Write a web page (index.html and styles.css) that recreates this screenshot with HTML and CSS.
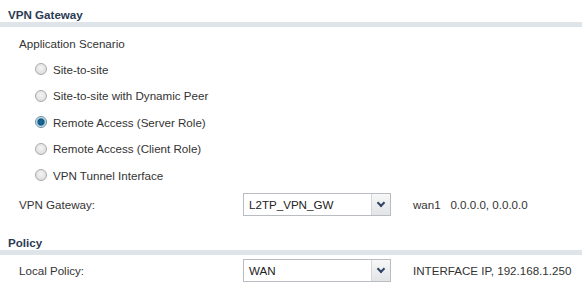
FILE: index.html
```html
<!doctype html>
<html lang="en">
<head>
    <meta charset="UTF-8">
    <title>VPN Gateway</title>
    <link rel="stylesheet" href="styles.css">
</head>
<body>
    <div class="section-title">VPN Gateway</div>
    <div class="section">
        <div class="group-label">Application Scenario</div>
        <label class="radio-row"><input type="radio" name="scenario"><span>Site-to-site</span></label>
        <label class="radio-row"><input type="radio" name="scenario"><span>Site-to-site with Dynamic Peer</span></label>
        <label class="radio-row"><input type="radio" name="scenario" checked><span>Remote Access (Server Role)</span></label>
        <label class="radio-row"><input type="radio" name="scenario"><span>Remote Access (Client Role)</span></label>
        <label class="radio-row"><input type="radio" name="scenario"><span>VPN Tunnel Interface</span></label>
        <div class="field">
            <div class="field-label">VPN Gateway:</div>
            <div class="select"><span class="select-value">L2TP_VPN_GW</span><span class="select-arrow"></span></div>
            <div class="field-info">wan1&nbsp;&nbsp;&nbsp;0.0.0.0, 0.0.0.0</div>
        </div>
    </div>
    <div class="section-title policy-title">Policy</div>
    <div class="section">
        <div class="field">
            <div class="field-label">Local Policy:</div>
            <div class="select"><span class="select-value">WAN</span><span class="select-arrow"></span></div>
            <div class="field-info">INTERFACE IP, 192.168.1.250</div>
        </div>
    </div>
</body>
</html>
```

FILE: styles.css
```css
* {
    margin: 0;
    padding: 0;
    box-sizing: border-box;
}

body {
    width: 582px;
    background: #fff;
    font-family: "Liberation Sans", Arial, sans-serif;
    font-size: 11.6px;
    color: #333;
}

.section-title {
    padding: 7px 0 0 8px;
    height: 27px;
    line-height: 15px;
    font-weight: bold;
    color: #2b3a55;
    border-bottom: 5px solid #dfe4e8;
}

.policy-title {
    margin-top: 8px;
}

.section {
    padding-left: 19px;
}

.group-label {
    padding-top: 10px;
    height: 29px;
    line-height: 14px;
}

.radio-row {
    display: flex;
    align-items: center;
    gap: 6px;
    height: 26.5px;
    padding-left: 16px;
}

.radio-row input {
    appearance: none;
    width: 12px;
    height: 12px;
    border-radius: 50%;
    border: 1px solid #a9a9a9;
    background: radial-gradient(circle at 50% 40%, #f4f4f4 0%, #d8d8d8 100%);
}

.radio-row input:checked {
    background: radial-gradient(circle, #1b6e9a 0, #0e5a85 3px, #9fc1d6 4px, #e9eef2 5px);
    border-color: #6b8ea5;
}

.field {
    display: flex;
    align-items: center;
    height: 31px;
}

.field-label {
    width: 224px;
}

.select {
    display: flex;
    width: 148px;
    height: 23px;
    border: 1px solid #b9bcc0;
    background: #fff;
}

.select-value {
    flex: 1;
    padding-left: 5px;
    line-height: 21px;
    color: #222;
}

.select-arrow {
    width: 19px;
    border-left: 1px solid #d4d6d9;
    background: linear-gradient(#f7f7f7, #e2e4e6);
    position: relative;
}

.select-arrow::after {
    content: "";
    position: absolute;
    left: 6px;
    top: 6px;
    width: 4px;
    height: 4px;
    border-right: 2px solid #2f4466;
    border-bottom: 2px solid #2f4466;
    transform: rotate(45deg);
}

.field-info {
    padding-left: 22px;
}
```
